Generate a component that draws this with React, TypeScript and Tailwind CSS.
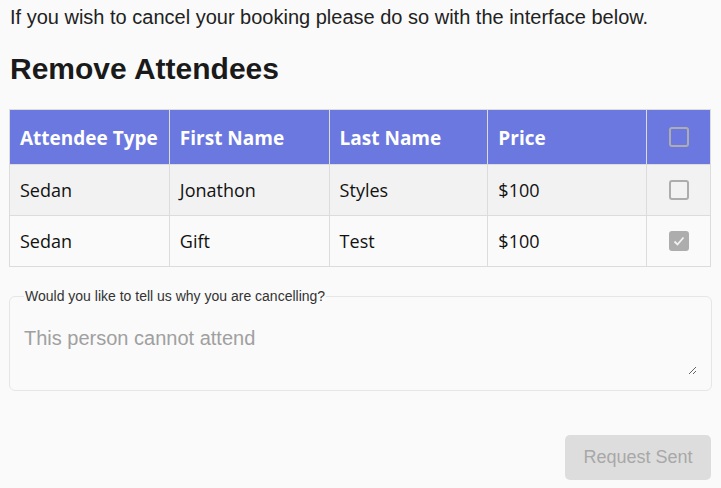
import React from "react";

const Check = ({ checked }: { checked?: boolean }) => (
  <div
    className={`w-[20px] h-[20px] rounded-[3px] border-2 border-[#adadad] flex items-center justify-center ${
      checked ? "bg-[#adadad]" : ""
    }`}
  >
    {checked && (
      <svg width="14" height="14" viewBox="0 0 14 14" fill="none">
        <path d="M2.5 7.5 L5.5 10.5 L11.5 3.5" stroke="#f2f2f2" strokeWidth="1.8" />
      </svg>
    )}
  </div>
);

export default function App() {
  const rows = [
    { t: "Sedan", f: "Jonathon", l: "Styles", p: "$100", c: false, bg: "bg-[#f2f2f2]" },
    { t: "Sedan", f: "Gift", l: "Test", p: "$100", c: true, bg: "bg-[#fafafa]" },
  ];
  const cell = "border border-[#dcdcdc] px-[10px] text-left";
  return (
    <div className="min-h-[488px] w-[721px] bg-[#fafafa] px-[9px] font-['Liberation_Sans',Arial,sans-serif] text-[#222]">
      <p className="text-[20px] leading-[24px] pt-[5px] pl-px">
        If you wish to cancel your booking please do so with the interface below.
      </p>
      <h2 className="text-[30px] font-bold leading-[36px] mt-[22px] pl-px text-[#1a1a1a]">Remove Attendees</h2>
      <table className="mt-[22px] w-[702px] border-collapse font-['Open_Sans',sans-serif] text-[18px]">
        <colgroup>
          <col className="w-[160px]" />
          <col className="w-[160px]" />
          <col className="w-[159px]" />
          <col className="w-[159px]" />
          <col className="w-[64px]" />
        </colgroup>
        <thead>
          <tr className="bg-[#6b78e0] text-white h-[55px] text-[19px]">
            <th className={`${cell} font-bold pt-[2px]`}>Attendee Type</th>
            <th className={`${cell} font-bold pt-[2px]`}>First Name</th>
            <th className={`${cell} font-bold pt-[2px]`}>Last Name</th>
            <th className={`${cell} font-bold pt-[2px]`}>Price</th>
            <th className={cell}>
              <div className="flex justify-center">
                <Check />
              </div>
            </th>
          </tr>
        </thead>
        <tbody>
          {rows.map((r, i) => (
            <tr key={i} className={`${r.bg} h-[51px] text-[#111]`}>
              <td className={cell}>{r.t}</td>
              <td className={cell}>{r.f}</td>
              <td className={cell}>{r.l}</td>
              <td className={cell}>{r.p}</td>
              <td className={cell}>
                <div className="flex justify-center">
                  <Check checked={r.c} />
                </div>
              </td>
            </tr>
          ))}
        </tbody>
      </table>
      <fieldset className="mt-[21px] border border-[#e6e6e6] rounded-[6px] px-[14px] pb-[14px] h-[103px]">
        <legend className="text-[14px] text-[#333] px-[1px] leading-[16px]">
          Would you like to tell us why you are cancelling?
        </legend>
        <textarea
          className="w-full h-[52px] mt-[19px] bg-transparent outline-none text-[20px] placeholder:text-[#a0a0a0] resize-y font-['Liberation_Sans',Arial,sans-serif] block"
          placeholder="This person cannot attend"
        />
      </fieldset>
      <div className="flex justify-end mt-[44px] pr-px">
        <button className="w-[146px] h-[45px] rounded-[5px] bg-[#dddddd] text-[#a8a8a8] text-[18px]">
          Request Sent
        </button>
      </div>
    </div>
  );
}
